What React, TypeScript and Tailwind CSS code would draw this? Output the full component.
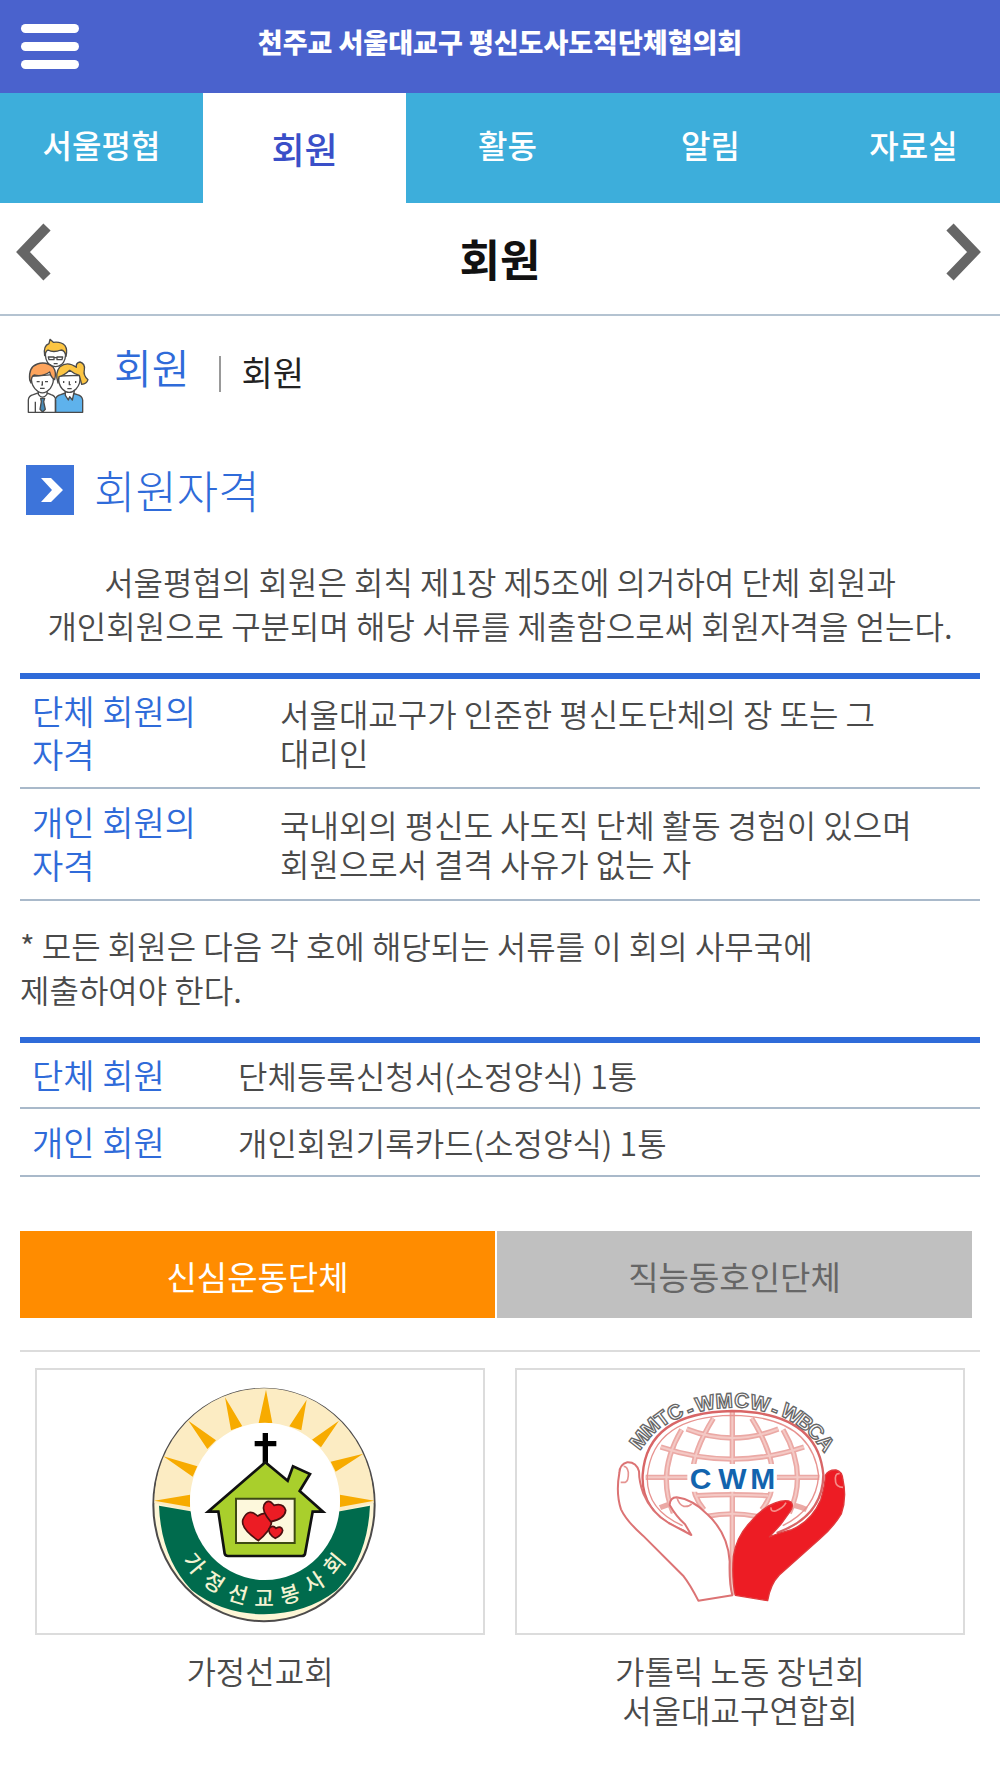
import React from "react"

const menus = ["서울평협", "회원", "활동", "알림", "자료실"]

const qualifications = [
  { name: "단체 회원의 자격", text: "서울대교구가 인준한 평신도단체의 장 또는 그 대리인" },
  { name: "개인 회원의 자격", text: "국내외의 평신도 사도직 단체 활동 경험이 있으며 회원으로서 결격 사유가 없는 자" },
]

const documents = [
  { name: "단체 회원", text: "단체등록신청서(소정양식) 1통" },
  { name: "개인 회원", text: "개인회원기록카드(소정양식) 1통" },
]

const groupTabs = ["신심운동단체", "직능동호인단체"]

type Letter = { c: string, x: number, y: number, r: number }

const familyLetters: Letter[] = [
  { c: "가", x: 527, y: 638, r: 50 },
  { c: "정", x: 585, y: 694, r: 33 },
  { c: "선", x: 655, y: 729, r: 16 },
  { c: "교", x: 732, y: 740, r: 0 },
  { c: "봉", x: 809, y: 729, r: -16 },
  { c: "사", x: 880, y: 694, r: -33 },
  { c: "회", x: 939, y: 640, r: -50 },
]

const cwmLetters: Letter[] = [
  { c: "M", x: 417, y: 270, r: -52 },
  { c: "M", x: 450, y: 232, r: -44 },
  { c: "T", x: 486, y: 206, r: -37 },
  { c: "C", x: 524, y: 186, r: -30 },
  { c: "-", x: 569, y: 177, r: -22 },
  { c: "W", x: 615, y: 160, r: -12 },
  { c: "M", x: 672, y: 152, r: -4 },
  { c: "C", x: 725, y: 151, r: 4 },
  { c: "W", x: 780, y: 160, r: 12 },
  { c: "-", x: 826, y: 178, r: 22 },
  { c: "W", x: 874, y: 190, r: 30 },
  { c: "B", x: 916, y: 217, r: 38 },
  { c: "C", x: 948, y: 245, r: 45 },
  { c: "A", x: 978, y: 279, r: 52 },
]

function PeopleIcon() {
  return (
    <svg viewBox="50 25 192 225" className="h-[75px] w-16 shrink-0" fill="#fff" stroke="#4a4a4a" strokeWidth="4" strokeLinejoin="round" aria-hidden="true">
      <path d="M109 62 Q105 92 121 105 Q139 117 156 105 Q172 92 168 62 Z" />
      <path d="M106 78 Q101 48 119 42 L122 29 L132 38 Q155 35 167 48 Q175 60 170 80 Q167 62 155 61 Q132 70 116 61 Q109 64 106 78Z" fill="#fcc543" />
      <path d="M117 82h17v8h-15zM143 82h17l-2 8h-15zM134 84h9M133 102h12" fill="none" />
      <path d="M57 248 V211 Q58 198 72 195 L91 188 H109 L125 195 Q138 198 139 211 V248Z" />
      <path d="M138 248 V211 Q140 198 154 195 L168 190 H188 L204 195 Q218 198 220 211 V248Z" fill="#5eb2ec" />
      <path d="M87 181 V194 Q99 211 113 194 V181M168 181 V197 L177 211 L181 201 L189 211 L195 184" />
      <path d="M94 206h12l-3 10 5 23-8 8-8-8 4-23Z" fill="#4689b5" />
      <path d="M67 140 Q64 161 76 176 Q99 203 123 176 Q136 158 131 135 Z" />
      <path d="M61 151 Q57 112 84 103 Q110 94 132 113 Q142 127 136 150 L129 144 Q124 139 121 127 Q100 142 74 136 Q65 140 65 160Z" fill="#fda45d" />
      <path d="M148 139 Q146 164 159 178 Q179 199 201 177 Q215 161 212 137 Z" />
      <path d="M201 113 Q199 99 212 97 Q228 102 225 120 Q221 138 236 150 Q232 163 217 164 L210 137 Q194 133 181 122 Q163 139 149 141 L146 160 Q136 130 152 111 Q175 93 201 113Z" fill="#fcc543" />
      <path d="M82 156h9M107 156h9M99 155v11h-3M92 176h14M163 154v6M199 154v6M180 155v10h4M174 177h13" fill="none" />
      <path d="M78 216V247M139 211V247" fill="none" />
    </svg>
  )
}

function ArcLetters({ letters, className }: { letters: Letter[], className: string }) {
  return (
    <g className={className} textAnchor="middle" dominantBaseline="central">
      {letters.map((l, i) => (
        <text key={i} transform={`translate(${l.x} ${l.y}) rotate(${l.r})`}>{l.c}</text>
      ))}
    </g>
  )
}

function FamilyLogo() {
  return (
    <svg viewBox="51 61 1338 788" className="block w-full" role="img" aria-label="가정선교회">
      <ellipse cx="732" cy="466" rx="332" ry="349" fill="#fdf6d6" stroke="#4d4b4b" strokeWidth="6" />
      <path d="M403 460 A329 344 0 0 1 1061 460 L960 485 H510Z" fill="#fcecc3" />
      {/* sun rays */}
      <path
        d="M403 453L510 435V472ZM430 320L532 350 518 381ZM505 213L588 272 562 298ZM615 143L667 230 633 242ZM738 120L757 220H716ZM860 150L844 242 808 230ZM957 213L903 293 876 270ZM1030 312L947 366 932 336ZM1063 453L960 435V472Z"
        fill="#f7ab00"
      />
      <path d="M417 468 Q423 625 515 722 Q606 793 732 794 Q859 793 950 722 Q1043 625 1050 468 L960 485 H512Z" fill="#006b4d" />
      <ellipse cx="735" cy="455" rx="225" ry="236" fill="#fff" />
      <path d="M736 250V345M704 282H769" stroke="#000" strokeWidth="16" fill="none" />
      <path
        d="M736 338L803 393L819 350L870 373L839 424L909 486H878L855 613Q853 619 846 619H624Q616 619 614 612L595 486H564Z"
        fill="#a9cf2c" stroke="#111" strokeWidth="8"
      />
      <path d="M648 447H824V580H648Z" fill="#fdf8dc" stroke="#3e4a13" strokeWidth="6" />
      <g fill="#ec1c24" stroke="#4b1010" strokeWidth="5">
        <path d="M715 573Q660 535 669 509Q685 473 713 499Q743 478 754 512Q758 537 715 573Z" />
        <path d="M752 516Q724 483 732 466Q744 444 762 467Q790 459 797 482Q795 507 752 516Z" />
        <path d="M766 566Q743 552 747 537Q758 524 768 536Q785 527 788 542Q786 557 766 566Z" />
      </g>
      <ArcLetters letters={familyLetters} className="fill-[#f4f3d2] text-[64px] font-medium" />
    </svg>
  )
}

function CwmLogo() {
  return (
    <svg viewBox="51 61 1338 788" className="block w-full" role="img" aria-label="가톨릭 노동 장년회 서울대교구연합회">
      <g fill="none" stroke="#eba9a5" strokeWidth="16">
        <path d="M697 187V735M640 206Q530 383 612 480M755 206Q865 383 785 480M545 240Q468 370 520 490M849 240Q925 370 868 490" />
        <path d="M560 238Q697 292 835 238M482 292Q697 365 912 292M437 383H565M830 383H958M590 438Q697 432 805 438M480 474Q510 460 540 455M855 465Q890 465 920 480M620 500Q697 485 770 500" />
      </g>
      <g fill="none" stroke="#f4c9c5" strokeWidth="6">
        <path d="M697 187V735M640 206Q530 383 612 480M755 206Q865 383 785 480M545 240Q468 370 520 490M849 240Q925 370 868 490" />
        <path d="M560 238Q697 292 835 238M482 292Q697 365 912 292M437 383H565M830 383H958M590 438Q697 432 805 438M620 500Q697 485 770 500" />
      </g>
      <path d="M555 545Q422 495 428 375Q441 188 697 184Q953 188 970 375Q969 500 830 550" fill="none" stroke="#d86566" strokeWidth="7" />
      <path d="M548 528Q437 480 442 378Q460 200 697 197Q935 200 956 378Q948 480 848 528" fill="none" stroke="#e79390" strokeWidth="4" />
      <path d="M562 343H830V426H562Z" fill="#fff" />
      {/* left hand */}
      <path
        d="M595 753L697 737Q687 700 689 635Q684 551 622 494Q578 449 530 443Q510 443 509 466Q528 500 555 524L574 556Q540 538 506 520Q454 490 430 432Q417 397 417 365Q409 337 382 338Q359 344 358 370Q347 430 363 479Q380 515 429 558L551 680Q570 704 595 753Z"
        fill="#fff" stroke="#dc7374" strokeWidth="6" strokeLinejoin="round"
      />
      <path d="M362 398H376Q386 394 385 368Q382 350 371 350M531 444Q536 464 551 470Q568 472 575 462" fill="none" stroke="#e59391" strokeWidth="5" />
      {/* right hand */}
      <path
        d="M803 753L706 737Q695 690 700 620Q709 560 752 516Q789 472 825 460Q858 448 873 457Q883 468 870 486L842 525L808 562Q836 550 875 540Q935 514 962 451Q976 405 976 377Q985 360 1008 361Q1027 365 1029 391Q1041 445 1024 493Q1000 533 959 568L838 676Q811 704 803 753Z"
        fill="#ed1c24" stroke="#e0393c" strokeWidth="4" strokeLinejoin="round"
      />
      <path d="M1019 372Q1002 370 1007 398Q1010 412 1029 413M813 473Q812 487 827 484Q850 475 858 459" fill="none" stroke="#f58d88" strokeWidth="5" />
      <g className="fill-[#1264ae] font-['Liberation_Sans'] text-[90px] font-bold" textAnchor="middle">
        <text x="602" y="418">C</text>
        <text x="697" y="418">W</text>
        <text x="788" y="418">M</text>
      </g>
      <ArcLetters letters={cwmLetters} className="fill-white stroke-[#666] stroke-[4px] font-['Liberation_Sans'] text-[62px] font-bold" />
    </svg>
  )
}

const groups = [
  { name: "가정선교회", Logo: FamilyLogo },
  { name: "가톨릭 노동 장년회 서울대교구연합회", Logo: CwmLogo },
]

export default function App() {
  const [menu, setMenu] = React.useState("회원")
  const [groupTab, setGroupTab] = React.useState(groupTabs[0])

  return (
    <div className="min-h-screen overflow-hidden bg-white font-['Noto_Sans_CJK_KR',sans-serif] text-[32px] font-[350] text-[#4a4a4a] break-keep">
      <header className="relative flex h-[93px] items-start justify-center bg-[#4a62cd] pt-5">
        <button aria-label="메뉴" className="absolute left-[21px] top-6 flex w-[58px] flex-col gap-[9px]">
          <span className="h-[9px] rounded-full bg-white" />
          <span className="h-[9px] rounded-full bg-white" />
          <span className="h-[9px] rounded-full bg-white" />
        </button>
        <h1 className="text-[27px] leading-[44px] font-black text-white">천주교 서울대교구 평신도사도직단체협의회</h1>
      </header>

      <nav className="flex h-[110px] bg-[#3daedb]">
        {menus.map(m => (
          <a
            key={m}
            href="#"
            onClick={() => setMenu(m)}
            className={m === menu
              ? "w-[203px] shrink-0 bg-white pt-1 text-center text-[36px] leading-[102px] font-medium text-[#3a4fc8]"
              : "w-[203px] shrink-0 text-center leading-[102px] font-medium text-white"}
          >
            {m}
          </a>
        ))}
      </nav>

      <div className="flex h-[113px] items-start justify-between border-b-2 border-[#b4c3d1] px-4 pt-5">
        <button aria-label="이전">
          <svg viewBox="0 0 38 58" className="h-[58px] w-[38px]"><path d="M31 4L7 29L31 54" fill="none" stroke="#666" strokeWidth="10" /></svg>
        </button>
        <h2 className="text-[44px] leading-[70px] font-bold text-[#111]">회원</h2>
        <button aria-label="다음">
          <svg viewBox="0 0 38 58" className="h-[58px] w-[38px]"><path d="M4 4L28 29L4 54" fill="none" stroke="#666" strokeWidth="10" /></svg>
        </button>
      </div>

      <main className="px-5">
        <div className="flex items-center pt-[22px] pl-1.5">
          <PeopleIcon />
          <strong className="ml-6 pb-5 text-[41px] leading-[50px] font-[350] text-[#2f6bd9]">회원</strong>
          <span className="ml-[30px] mb-1 h-9 w-0.5 bg-[#999]" />
          <span className="ml-5 pb-2 text-[34px] leading-[50px] font-normal text-[#222]">회원</span>
        </div>

        <div className="mt-[52px] flex items-center pl-1.5">
          <span className="flex h-[50px] w-12 items-center justify-center bg-[#3d74da]">
            <svg viewBox="0 0 22 26" className="ml-1 h-[26px] w-[22px]"><path d="M0 1H10L22 13L10 25H0L11 13Z" fill="#fff" /></svg>
          </span>
          <h3 className="ml-5 text-[45px] leading-[50px] font-light text-[#2f6bd9]">회원자격</h3>
        </div>

        <p className="mt-11 text-center leading-[44px]">
          서울평협의 회원은 회칙 제1장 제5조에 의거하여 단체 회원과<br />
          개인회원으로 구분되며 해당 서류를 제출함으로써 회원자격을 얻는다.
        </p>

        <table className="mt-[26px] w-full border-t-6 border-[#2f6bd9] text-left">
          <tbody>
            {qualifications.map(q => (
              <tr key={q.name} className="h-28 border-b-2 border-[#a9b9ca]">
                <th scope="row" className="w-[248px] pr-16 pb-0.5 pl-3 text-[34px] leading-[43px] font-[350] text-[#2f6bd9]">{q.name}</th>
                <td className="px-3 leading-[39px]">{q.text}</td>
              </tr>
            ))}
          </tbody>
        </table>

        <p className="mt-[22px] pr-32 leading-[44px]">
          * 모든 회원은 다음 각 호에 해당되는 서류를 이 회의 사무국에 제출하여야 한다.
        </p>

        <table className="mt-[26px] w-full border-t-6 border-[#2f6bd9] text-left">
          <tbody>
            {documents.map(d => (
              <tr key={d.name} className="h-[68px] border-b-2 border-[#a9b9ca]">
                <th scope="row" className="w-[206px] pb-0.5 pl-3 text-[34px] leading-[43px] font-[350] text-[#2f6bd9]">{d.name}</th>
                <td className="px-3 leading-[39px]">{d.text}</td>
              </tr>
            ))}
          </tbody>
        </table>

        <div className="mt-[54px] mr-2 grid grid-cols-2 gap-0.5">
          {groupTabs.map(t => (
            <button
              key={t}
              onClick={() => setGroupTab(t)}
              className={t === groupTab
                ? "h-[87px] bg-[#ff8c00] pt-1 text-[33px] font-normal text-white"
                : "h-[87px] bg-[#c0c0c0] pt-1 text-[33px] font-normal text-[#666]"}
            >
              {t}
            </button>
          ))}
        </div>

        <ul className="mt-8 grid grid-cols-2 gap-[30px] border-t-2 border-[#dcdcdc] px-[15px] pt-4">
          {groups.map(({ name, Logo }) => (
            <li key={name}>
              <a href="#" className="block">
                <div className="border-2 border-[#dcdcdc]"><Logo /></div>
                <p className="mt-4 px-20 text-center leading-[39px]">{name}</p>
              </a>
            </li>
          ))}
        </ul>
      </main>
    </div>
  )
}
